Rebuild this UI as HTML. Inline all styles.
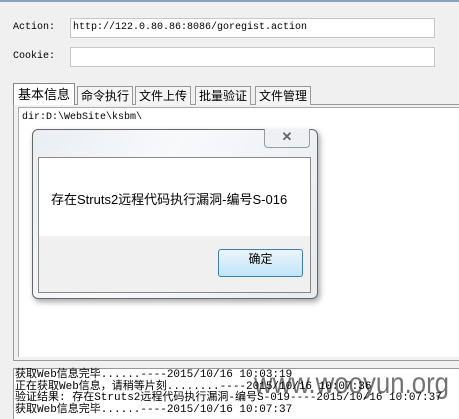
<!DOCTYPE html>
<html><head><meta charset="utf-8"><style>
body{margin:0;width:459px;height:414px;background:#f0f0f0;position:relative;overflow:hidden;font-family:"Liberation Mono","Noto Sans CJK SC",monospace;}
.a{position:absolute}
.lbl{font-size:10px;color:#000}
.inp{background:#fff;border:1px solid #c8c8c8;box-sizing:border-box}
.tab{position:absolute;top:86px;height:19px;border:1px solid #999;border-bottom:none;background:#f4f4f4;font-family:"Liberation Sans","Noto Sans CJK SC",sans-serif;font-size:12px;line-height:18px;padding:0 3px;box-sizing:border-box}
.log{font-family:"Liberation Mono","Noto Sans CJK SC",monospace;font-size:11px;line-height:11.5px;white-space:pre;color:#000;letter-spacing:0}
</style></head><body>
<div class="a" style="left:0;top:0;width:459px;height:2px;background:#8aa4c0"></div>
<div class="a lbl" style="left:13px;top:22px">Action:</div>
<div class="a inp" style="left:70px;top:18px;width:365px;height:20px"></div>
<div class="a lbl" style="left:73px;top:22px">http://122.0.80.86:8086/goregist.action</div>
<div class="a lbl" style="left:13px;top:51px">Cookie:</div>
<div class="a inp" style="left:70px;top:47px;width:365px;height:20px"></div>
<div class="a" style="left:13px;top:104px;width:450px;height:257px;border:1px solid #999;border-right:none;box-sizing:border-box;background:#f0f0f0"></div>
<div class="a" style="left:18px;top:107px;width:445px;height:249px;background:#fff;border-top:1px solid #aaa;border-left:1px solid #aaa"></div>
<div class="tab" style="left:13px;top:83px;height:22px;background:#fff;border-color:#888;padding:0 4px;line-height:22px;font-size:13px">基本信息</div>
<div class="tab" style="left:77px">命令执行</div>
<div class="tab" style="left:135px">文件上传</div>
<div class="tab" style="left:195px">批量验证</div>
<div class="tab" style="left:255px">文件管理</div>
<div class="a lbl" style="left:22px;top:112px">dir:D:\WebSite\ksbm\</div>
<div class="a" style="left:32px;top:129px;width:286px;height:170px;border:1px solid #666;border-radius:6px;background:linear-gradient(120deg,#e9eef3,#f8f9fb 40%,#e6ebf0);box-shadow:2px 3px 6px rgba(0,0,0,.35);box-sizing:border-box"></div>
<div class="a" style="left:264px;top:129px;width:46px;height:19px;border:1px solid #999;border-top:none;border-radius:0 0 4px 4px;background:#eef0f3;box-sizing:border-box;text-align:center;font:bold 13px 'Liberation Sans',sans-serif;color:#666;line-height:16px">✕</div>
<div class="a" style="left:38px;top:157px;width:273px;height:136px;border:1px solid #888;background:#f0f0f0;box-sizing:border-box"></div>
<div class="a" style="left:39px;top:158px;width:271px;height:78px;background:#fff"></div>
<div class="a" style="left:51px;top:189px;font:13px 'Liberation Sans','Noto Sans CJK SC',sans-serif">存在Struts2远程代码执行漏洞-编号S-016</div>
<div class="a" style="left:218px;top:249px;width:85px;height:28px;border:1px solid #3c7fb1;border-radius:3px;background:linear-gradient(#eaf6fd,#d7ecf9 50%,#bee6fd);box-sizing:border-box;text-align:center;line-height:26px;font:12px 'Liberation Sans','Noto Sans CJK SC',sans-serif">确定</div>
<div class="a" style="left:13px;top:368px;width:450px;height:50px;background:#fff;border-top:1px solid #999;border-left:1px solid #999"></div>
<div class="a" style="left:254px;top:367px;font:30px 'Liberation Sans',sans-serif;color:rgba(90,90,90,.85);transform:scaleX(0.86);transform-origin:0 0;white-space:nowrap">www.wooyun.org</div>
<div class="a log" style="left:15px;top:370px">获取Web信息完毕......----2015/10/16 10:03:19
正在获取Web信息，请稍等片刻........----2015/10/16 10:07:36
验证结果: 存在Struts2远程代码执行漏洞-编号S-019----2015/10/16 10:07:37
获取Web信息完毕......----2015/10/16 10:07:37</div>
</body></html>
